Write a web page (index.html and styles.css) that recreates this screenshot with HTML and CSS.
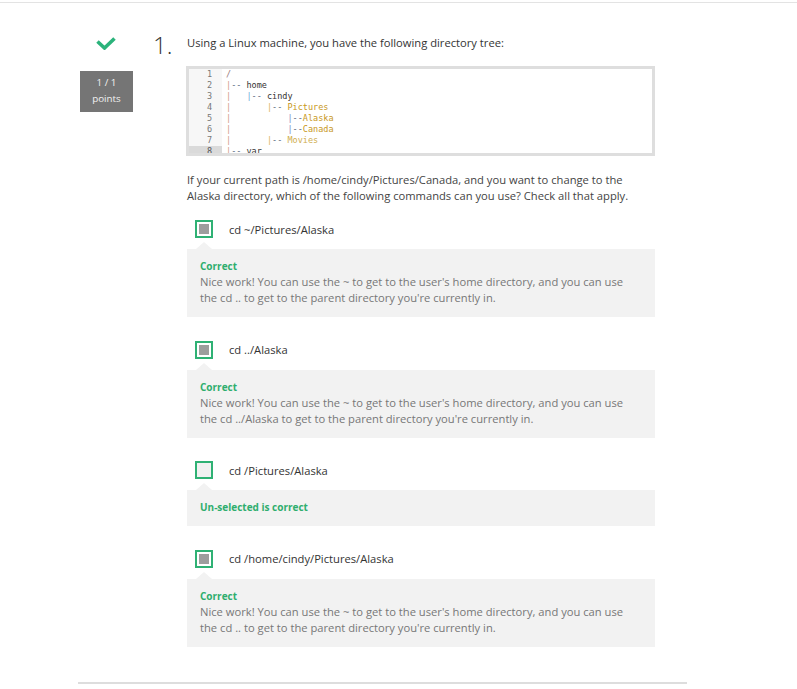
FILE: index.html
```html
<!DOCTYPE html>
<html>
<head>
<meta charset="utf-8">
<link rel="stylesheet" href="styles.css">
</head>
<body>
<div class="topline"></div>
<div class="question">
  <div class="status">
    <svg class="check" width="20" height="13" viewBox="0 0 20 13">
      <polyline points="1.5,4.5 8.5,11 18.5,1.5" fill="none" stroke="#2bb37b" stroke-width="3.6"/>
    </svg>
    <div class="score"><div>1 / 1</div><div>points</div></div>
  </div>
  <div class="num">1.</div>
  <div class="content">
    <p class="title">Using a Linux machine, you have the following directory tree:</p>
    <div class="code">
      <div class="gutter">
        <div class="ln">1</div><div class="ln">2</div><div class="ln">3</div><div class="ln">4</div><div class="ln">5</div><div class="ln">6</div><div class="ln">7</div><div class="ln active">8</div>
      </div>
      <div class="lines">
        <div class="cl"><span class="root">/</span></div>
        <div class="cl"><span class="p0">|</span><span class="d">-- </span><span class="n">home</span></div>
        <div class="cl"><span class="p0">|</span>   <span class="p1">|</span><span class="d">-- </span><span class="n">cindy</span></div>
        <div class="cl"><span class="p0">|</span>       <span class="p2">|</span><span class="d">-- </span><span class="y">Pictures</span></div>
        <div class="cl"><span class="p0">|</span>           <span class="p3">|</span><span class="d">--</span><span class="y">Alaska</span></div>
        <div class="cl"><span class="p0">|</span>           <span class="p3">|</span><span class="d">--</span><span class="y">Canada</span></div>
        <div class="cl"><span class="p0">|</span>       <span class="p2">|</span><span class="d">-- </span><span class="y2">Movies</span></div>
        <div class="cl"><span class="p0">|</span><span class="d">-- </span><span class="n">var</span></div>
      </div>
    </div>
    <p class="prompt">If your current path is /home/cindy/Pictures/Canada, and you want to change to the Alaska directory, which of the following commands can you use? Check all that apply.</p>

    <div class="options">
      <div class="option">
        <div class="row"><span class="box checked"><span class="fill"></span></span><span class="label">cd ~/Pictures/Alaska</span></div>
        <div class="feedback">
          <div class="verdict">Correct</div>
          <div class="explain">Nice work! You can use the ~ to get to the user's home directory, and you can use the cd .. to get to the parent directory you're currently in.</div>
        </div>
      </div>
      <div class="option">
        <div class="row"><span class="box checked"><span class="fill"></span></span><span class="label">cd ../Alaska</span></div>
        <div class="feedback">
          <div class="verdict">Correct</div>
          <div class="explain">Nice work! You can use the ~ to get to the user's home directory, and you can use the cd ../Alaska to get to the parent directory you're currently in.</div>
        </div>
      </div>
      <div class="option">
        <div class="row"><span class="box"></span><span class="label">cd /Pictures/Alaska</span></div>
        <div class="feedback">
          <div class="verdict">Un-selected is correct</div>
        </div>
      </div>
      <div class="option">
        <div class="row"><span class="box checked"><span class="fill"></span></span><span class="label">cd /home/cindy/Pictures/Alaska</span></div>
        <div class="feedback">
          <div class="verdict">Correct</div>
          <div class="explain">Nice work! You can use the ~ to get to the user's home directory, and you can use the cd .. to get to the parent directory you're currently in.</div>
        </div>
      </div>
    </div>
  </div>
</div>
<div class="bottomline"></div>
</body>
</html>
```

FILE: styles.css
```css
html, body {
  margin: 0;
  padding: 0;
  background: #fff;
}
body {
  font-family: "Open Sans", "Liberation Sans", sans-serif;
  color: #333;
  padding-top: 2px;
}
.topline {
  height: 1px;
  background: #e3e3e3;
}
.question {
  margin: 32px 0 0 78px;
  width: 609px;
  padding-left: 2px;
  box-sizing: border-box;
  display: flex;
  align-items: flex-start;
}
.status {
  width: 53px;
  flex: none;
  display: flex;
  flex-direction: column;
  align-items: center;
  padding-top: 2px;
}
.check {
  display: block;
  margin-left: -2px;
}
.score {
  margin-top: 21px;
  width: 53px;
  height: 41px;
  box-sizing: border-box;
  padding-top: 4px;
  background: #757575;
  color: #f2f2f2;
  font-size: 9.8px;
  line-height: 16px;
  text-align: center;
}
.num {
  flex: none;
  margin-left: 20px;
  margin-top: -2px;
  width: 34px;
  font-size: 24px;
  line-height: 24px;
  font-weight: 300;
  color: #333;
}
.content {
  flex: none;
  width: 468px;
}
.title {
  margin: 0;
  font-size: 11.2px;
  line-height: 16px;
  color: #333;
}
.code {
  margin-top: 15px;
  margin-left: -1px;
  height: 84px;
  border: 3px solid #dedede;
  display: flex;
  overflow: hidden;
  font-family: "DejaVu Sans Mono", "Liberation Mono", monospace;
  font-size: 8.5px;
  line-height: 11px;
}
.gutter {
  width: 33px;
  background: #f7f7f7;
  flex: none;
}
.ln {
  padding-right: 10px;
  text-align: right;
  color: #777;
  height: 11px;
}
.ln.active {
  background: #dadada;
  color: #555;
}
.lines {
  padding-left: 4px;
  color: #333;
}
.cl {
  height: 11px;
  white-space: pre;
}
.root { color: #9a7d7d; }
.p0 { color: #d09a84; }
.p1 { color: #6ea6d8; }
.p2 { color: #d8b45e; }
.p3 { color: #7d86c8; }
.d { color: #5a6a80; }
.n { color: #333; }
.y { color: #c8981c; }
.y2 { color: #d0ae50; }
.prompt {
  margin: 16px 10px 0 0;
  font-size: 11.2px;
  line-height: 16px;
  color: #444;
}
.options {
  margin-top: 16px;
}
.option + .option {
  margin-top: 23.5px;
}
.row {
  display: flex;
  align-items: center;
  height: 18px;
  padding-left: 8px;
}
.box {
  width: 18px;
  height: 18px;
  box-sizing: border-box;
  border: 2px solid #2fb174;
  background: #f1f1f1;
  padding: 2px;
  flex: none;
}
.box.checked {
  background: #fff;
}
.fill {
  display: block;
  width: 10px;
  height: 10px;
  background: #9d9d9d;
}
.label {
  margin-left: 16px;
  font-size: 11.2px;
  color: #333;
}
.feedback {
  position: relative;
  margin-top: 11px;
  background: #f2f2f2;
  padding: 10px 26px 11px 13px;
}
.feedback::before {
  content: "";
  position: absolute;
  top: -7px;
  left: 9px;
  border-left: 8px solid transparent;
  border-right: 8px solid transparent;
  border-bottom: 7px solid #f2f2f2;
}
.verdict {
  font-size: 10px;
  line-height: 15px;
  font-weight: 700;
  color: #2fae6e;
}
.explain {
  font-size: 11.2px;
  line-height: 16px;
  color: #777;
}
.bottomline {
  margin: 35px 0 0 78px;
  width: 609px;
  height: 2px;
  background: #dddddd;
}
```
